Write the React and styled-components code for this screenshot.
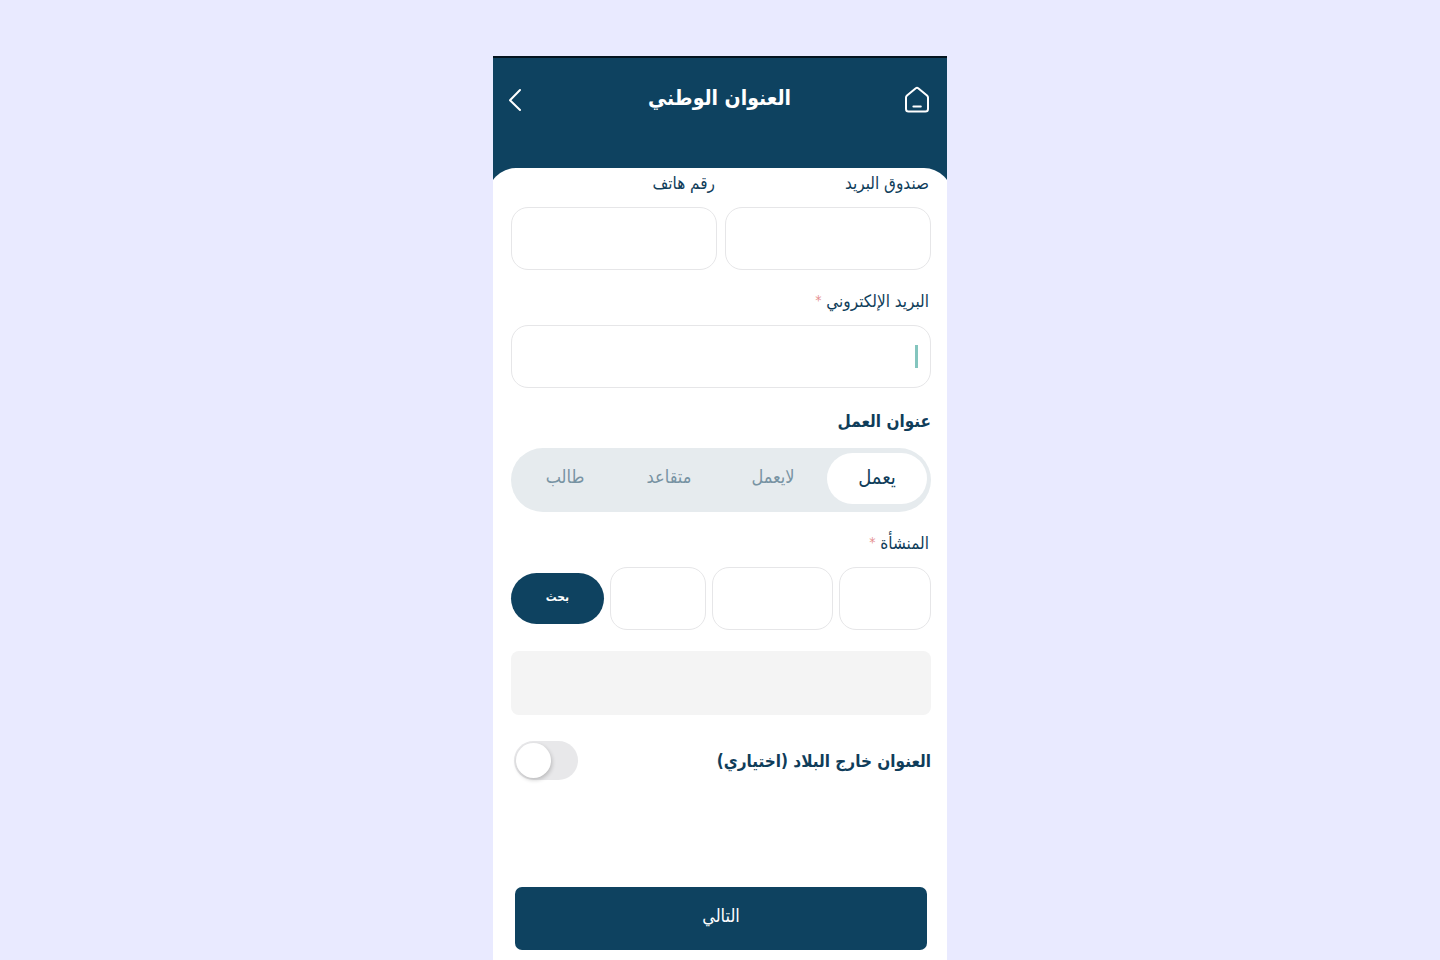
import React, { useState } from 'react'
import styled, { createGlobalStyle } from 'styled-components';

const GlobalStyle = createGlobalStyle`
    * {
        box-sizing: border-box;
    }

    body {
        margin: 0;
        background: #e9eaff;
    }

    button, input {
        font-family: inherit;
    }
`;

const Page = styled.div`
    min-height: 100vh;
    padding-top: 56px;
    display: flex;
    justify-content: center;
    font-family: "DejaVu Sans Condensed", "DejaVu Sans", sans-serif;
    color: #0f3d5a;
`;

const Screen = styled.main`
    width: 100%;
    max-width: 454px;
    display: flex;
    flex-direction: column;
    overflow: hidden;
    background: #0e4260;
    border-top: 2px solid #04141f;
`;

const Header = styled.header`
    display: grid;
    grid-template-columns: 1fr auto 1fr;
    align-items: center;
    height: 110px;
    padding: 0 17px 27px 16px;
`;

const Title = styled.h1`
    margin: 0;
    padding-bottom: 3px;
    font-size: 21px;
    line-height: 32px;
    font-weight: 700;
    color: #fff;
`;

const IconButton = styled.button`
    display: flex;
    justify-self: ${({ $end }) => ($end ? 'end' : 'start')};
    padding: 0;
    border: 0;
    background: none;
    color: #fff;
    cursor: pointer;
`;

const Sheet = styled.form`
    flex: 1;
    display: flex;
    flex-direction: column;
    margin: 0 -5px;
    padding: 3px 21px 10px 23px;
    border-radius: 28px 28px 0 0;
    background: #fff;
`;

const Columns = styled.div`
    display: grid;
    grid-template-columns: 1fr 1fr;
    gap: 8px;
`;

const Field = styled.div`
    margin-bottom: 19px;
`;

const Label = styled.label`
    display: block;
    margin-bottom: 12px;
    padding: 0 2px;
    font-size: 17px;
    line-height: 24px;
`;

const Required = styled.span`
    color: #e58f8f;
    font-size: 14px;
    line-height: 1;
    vertical-align: 2px;
`;

const Input = styled.input`
    display: block;
    width: 100%;
    min-width: 0;
    height: 63px;
    padding: 0 14px;
    border: 1px solid #e6e6e8;
    border-radius: 17px;
    background: #fff;
    font-size: 17px;
    color: inherit;
    outline: none;
`;

const CaretBox = styled.div`
    position: relative;
`;

const Caret = styled.span`
    position: absolute;
    top: 20px;
    right: 13px;
    width: 3px;
    height: 23px;
    background: #84c5be;
`;

const SectionTitle = styled.h2`
    margin: 2px 0 15px;
    font-size: 17px;
    line-height: 24px;
    font-weight: 700;
`;

const Segments = styled.div`
    display: grid;
    grid-template-columns: repeat(4, 1fr);
    gap: 4px;
    height: 64px;
    margin-bottom: 19px;
    padding: 5px 4px 8px;
    border-radius: 32px;
    background: #e6ebee;
`;

const HiddenRadio = styled.input`
    position: absolute;
    opacity: 0;
    pointer-events: none;
`;

const Segment = styled.label`
    display: flex;
    align-items: center;
    justify-content: center;
    padding-bottom: 3px;
    border-radius: 26px;
    font-size: ${({ $active }) => ($active ? '20px' : '18px')};
    line-height: 24px;
    color: ${({ $active }) => ($active ? '#0f3d5a' : '#7893a3')};
    background: ${({ $active }) => ($active ? '#fff' : 'transparent')};
    cursor: pointer;
`;

const SearchRow = styled.div`
    display: grid;
    grid-template-columns: 92fr 122fr 96fr 93fr;
    align-items: center;
    gap: 6px;
`;

const SearchButton = styled.button`
    height: 51px;
    padding: 0 0 3px;
    border: 0;
    border-radius: 26px;
    background: #0e4260;
    color: #fff;
    font-size: 12px;
    font-weight: 700;
    cursor: pointer;
`;

const Result = styled.output`
    display: block;
    height: 64px;
    margin: 2px 0 26px;
    border-radius: 8px;
    background: #f4f4f4;
`;

const SwitchRow = styled.label`
    display: flex;
    align-items: center;
    justify-content: space-between;
    margin-bottom: 24px;
    padding-left: 3px;
    font-size: 17px;
    line-height: 24px;
    font-weight: 700;
`;

const Switch = styled.input`
    appearance: none;
    display: flex;
    flex: none;
    width: 64px;
    height: 39px;
    margin: 0;
    padding: 2px;
    border-radius: 20px;
    background: #e8e8ea;
    direction: ltr;
    cursor: pointer;

    &::before {
        content: '';
        width: 35px;
        height: 35px;
        border-radius: 50%;
        background: #fff;
        box-shadow: 1px 2px 4px rgba(0, 0, 0, 0.2);
    }

    &:checked {
        justify-content: flex-end;
        background: #84c5be;
    }
`;

const NextButton = styled.button`
    height: 63px;
    margin: auto 4px 0;
    padding: 0 0 6px;
    border: 0;
    border-radius: 7px;
    background: #0e4260;
    color: #fff;
    font-size: 18px;
    line-height: 24px;
    cursor: pointer;
`;

const jobs = ['يعمل', 'لايعمل', 'متقاعد', 'طالب'];

const HomeIcon = () => (
    <svg width="26" height="28" viewBox="0 0 26 28" fill="none" stroke="currentColor" strokeWidth="2" strokeLinecap="round" strokeLinejoin="round" aria-hidden="true">
        <path d="M11.8 2.2 3 9.4Q2 10.3 2 11.6V23Q2 25.6 4.6 25.6H21.4Q24 25.6 24 23V11.6Q24 10.3 23 9.4L14.2 2.2Q13 1.3 11.8 2.2Z" />
        <path d="M9.4 20.4H16.8" />
    </svg>
);

const BackIcon = () => (
    <svg width="14" height="24" viewBox="0 0 14 24" fill="none" stroke="currentColor" strokeWidth="2" strokeLinecap="round" strokeLinejoin="round" aria-hidden="true">
        <path d="M11 2 1 12.2 11 22" />
    </svg>
);

const App = () => {
    const [job, setJob] = useState(jobs[0]);

    return (
        <Page dir="rtl" lang="ar">
            <GlobalStyle />
            <Screen>
                <Header>
                    <IconButton type="button"><HomeIcon /></IconButton>
                    <Title>العنوان الوطني</Title>
                    <IconButton type="button" $end><BackIcon /></IconButton>
                </Header>
                <Sheet onSubmit={(e) => e.preventDefault()}>
                    <Columns>
                        <Field>
                            <Label htmlFor="pobox">صندوق البريد</Label>
                            <Input id="pobox" />
                        </Field>
                        <Field>
                            <Label htmlFor="phone">رقم هاتف</Label>
                            <Input id="phone" type="tel" />
                        </Field>
                    </Columns>
                    <Field>
                        <Label htmlFor="email">البريد الإلكتروني <Required>*</Required></Label>
                        <CaretBox>
                            <Input id="email" type="email" />
                            <Caret />
                        </CaretBox>
                    </Field>

                    <SectionTitle id="work">عنوان العمل</SectionTitle>
                    <Segments role="radiogroup" aria-labelledby="work">
                        {jobs.map((name) => (
                            <Segment key={name} $active={job === name}>
                                <HiddenRadio type="radio" name="job" checked={job === name} onChange={() => setJob(name)} />
                                {name}
                            </Segment>
                        ))}
                    </Segments>

                    <Field>
                        <Label id="facility" htmlFor="facility-code">المنشأة <Required>*</Required></Label>
                        <SearchRow>
                            <Input id="facility-code" />
                            <Input aria-labelledby="facility" />
                            <Input aria-labelledby="facility" />
                            <SearchButton type="button">بحث</SearchButton>
                        </SearchRow>
                    </Field>
                    <Result />

                    <SwitchRow>
                        العنوان خارج البلاد (اختياري)
                        <Switch type="checkbox" role="switch" />
                    </SwitchRow>

                    <NextButton type="submit">التالي</NextButton>
                </Sheet>
            </Screen>
        </Page>
    )
}

export default App
